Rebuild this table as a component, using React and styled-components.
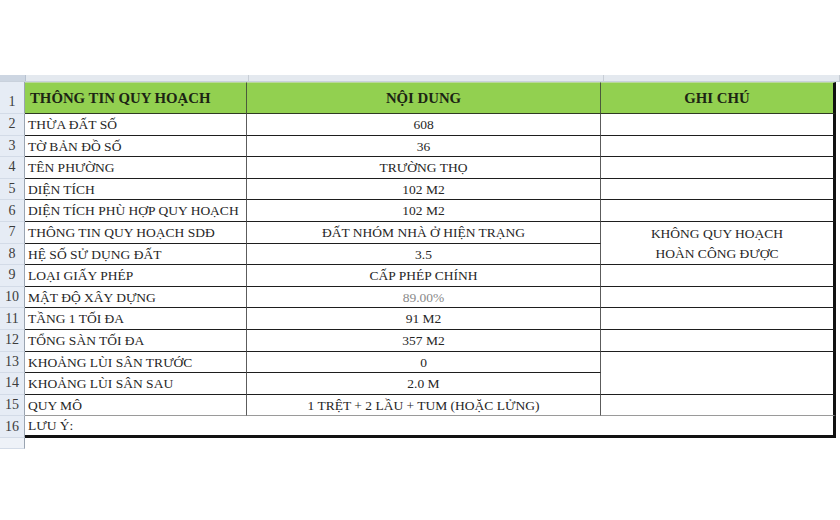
import React from 'react'
import styled, { createGlobalStyle } from 'styled-components'

const GlobalStyle = createGlobalStyle`
	html, body {
		margin: 0;
		padding: 0;
		background: #fff;
	}
	body {
		font-family: 'Liberation Serif', 'Times New Roman', serif;
		color: #262626;
	}
`

const ROW_H = 21.6

const rows = [
	{ label: 'THỪA ĐẤT SỐ', value: '608' },
	{ label: 'TỜ BẢN ĐỒ SỐ', value: '36' },
	{ label: 'TÊN PHƯỜNG', value: 'TRƯỜNG THỌ' },
	{ label: 'DIỆN TÍCH', value: '102 M2' },
	{ label: 'DIỆN TÍCH PHÙ HỢP QUY HOẠCH', value: '102 M2' },
	{ label: 'THÔNG TIN QUY HOẠCH SDĐ', value: 'ĐẤT NHÓM NHÀ Ở HIỆN TRẠNG' },
	{ label: 'HỆ SỐ SỬ DỤNG ĐẤT', value: '3.5' },
	{ label: 'LOẠI GIẤY PHÉP', value: 'CẤP PHÉP CHÍNH' },
	{ label: 'MẬT ĐỘ XÂY DỰNG', value: '89.00%', faded: true },
	{ label: 'TẦNG 1 TỐI ĐA', value: '91 M2' },
	{ label: 'TỔNG SÀN TỐI ĐA', value: '357 M2' },
	{ label: 'KHOẢNG LÙI SÂN TRƯỚC', value: '0' },
	{ label: 'KHOẢNG LÙI SÂN SAU', value: '2.0 M' },
	{ label: 'QUY MÔ', value: '1 TRỆT + 2 LẦU + TUM (HOẶC LỬNG)' },
]

// column C cells: [start row index (0 = row 2), span, lines]
const notes = [
	[0, 1, []],
	[1, 1, []],
	[2, 1, []],
	[3, 1, []],
	[4, 1, []],
	[5, 2, ['KHÔNG QUY HOẠCH', 'HOÀN CÔNG ĐƯỢC']],
	[7, 1, []],
	[8, 1, []],
	[9, 1, []],
	[10, 1, []],
	[11, 2, []],
	[13, 1, []],
]

export default function App() {
	return (
		<>
			<GlobalStyle />
			<Page>
				<Sheet>
					<ColStrip>
						<StripCorner />
						<StripCell $w={222} />
						<StripCell $w={354} />
						<StripCell $w={235} />
					</ColStrip>
					<Grid>
						<RowNum $row={1} $header>1</RowNum>
						<HeadCell $col={2} $align='left'>THÔNG TIN QUY HOẠCH</HeadCell>
						<HeadCell $col={3}>NỘI DUNG</HeadCell>
						<HeadCell $col={4} $last>GHI CHÚ</HeadCell>

						{rows.map((r, i) => (
							<React.Fragment key={r.label}>
								<RowNum $row={i + 2}>{i + 2}</RowNum>
								<LabelCell $row={i + 2} $soft={i === 13}>
									{r.label}
								</LabelCell>
								<ValueCell $row={i + 2} $soft={i === 13} $faded={r.faded}>
									{r.value}
								</ValueCell>
							</React.Fragment>
						))}

						{notes.map(([start, span, lines]) => (
							<NoteCell key={start} $row={start + 2} $span={span} $soft={start === 13}>
								{lines.map(l => (
									<NoteLine key={l}>{l}</NoteLine>
								))}
							</NoteCell>
						))}

						<RowNum $row={16}>16</RowNum>
						<NoteRow>LƯU Ý:</NoteRow>

						<RowNum $row={17} $tail />
						<TailCell />
					</Grid>
				</Sheet>
			</Page>
		</>
	)
}

const Page = styled.div`
	width: 840px;
	height: 520px;
	background: #fff;
	overflow: hidden;
	padding-top: 75px;
	box-sizing: border-box;
`

const Sheet = styled.div`
	width: 840px;
`

const ColStrip = styled.div`
	display: flex;
	height: 6px;
	background: #e4e9ef;
	border-bottom: 1px solid #c9d1dc;
	overflow: hidden;
`

const StripCorner = styled.div`
	width: 25px;
	background: #cdd6e2;
	border-right: 1px solid #b7c2d0;
`

const StripCell = styled.div`
	width: ${p => p.$w}px;
	border-right: 1px solid #c8ced6;
`

const Grid = styled.div`
	display: grid;
	grid-template-columns: 25px 222px 354px 235px 4px;
	grid-template-rows: 32px repeat(15, ${ROW_H}px) 11px;
	font-size: 13.5px;
	line-height: 1;
`

const RowNum = styled.div`
	grid-column: 1;
	grid-row: ${p => p.$row};
	background: ${p => (p.$tail ? '#eef2f8' : '#e6ecf5')};
	border-bottom: 1px solid #d3dbe7;
	border-right: 1px solid #9aa4b1;
	color: #3c3c3c;
	font-size: 14px;
	display: flex;
	align-items: ${p => (p.$header ? 'flex-end' : 'center')};
	justify-content: center;
	padding-bottom: ${p => (p.$header ? '4px' : '0')};
	box-sizing: border-box;
`

const HeadCell = styled.div`
	grid-column: ${p => p.$col};
	grid-row: 1;
	background: #92d050;
	border-bottom: 1px solid #2f3a22;
	border-right: ${p => (p.$last ? '3px solid #111' : '1.5px solid #4b5a3c')};
	border-top: 1px solid #b9d99a;
	font-weight: bold;
	font-size: 14.8px;
	color: #1c2414;
	display: flex;
	align-items: center;
	justify-content: ${p => (p.$align === 'left' ? 'flex-start' : 'center')};
	padding-left: ${p => (p.$align === 'left' ? '5px' : '0')};
	box-sizing: border-box;
	white-space: nowrap;
`

const BodyCell = styled.div`
	grid-row: ${p => p.$row};
	border-bottom: 1px solid ${p => (p.$soft ? '#9a9a9a' : '#1e1e1e')};
	border-right: 1.5px solid #5c5c5c;
	display: flex;
	align-items: center;
	box-sizing: border-box;
	white-space: nowrap;
	background: #fff;
`

const LabelCell = styled(BodyCell)`
	grid-column: 2;
	padding-left: 3px;
	padding-top: 1px;
`

const ValueCell = styled(BodyCell)`
	grid-column: 3;
	justify-content: center;
	padding-top: 1px;
	color: ${p => (p.$faded ? '#8a8a8a' : '#262626')};
`

const NoteCell = styled(BodyCell)`
	grid-column: 4;
	grid-row: ${p => p.$row} / span ${p => p.$span};
	border-right: 3px solid #111;
	flex-direction: column;
	justify-content: center;
	padding-top: 2px;
`

const NoteLine = styled.div`
	height: ${ROW_H}px;
	display: flex;
	align-items: center;
	justify-content: center;
`

const NoteRow = styled.div`
	grid-column: 2 / span 3;
	grid-row: 16;
	border-bottom: 3px solid #111;
	border-right: 3px solid #111;
	display: flex;
	align-items: center;
	padding-left: 3px;
	box-sizing: border-box;
`

const TailCell = styled.div`
	grid-column: 2 / span 3;
	grid-row: 17;
	background: #fff;
`
